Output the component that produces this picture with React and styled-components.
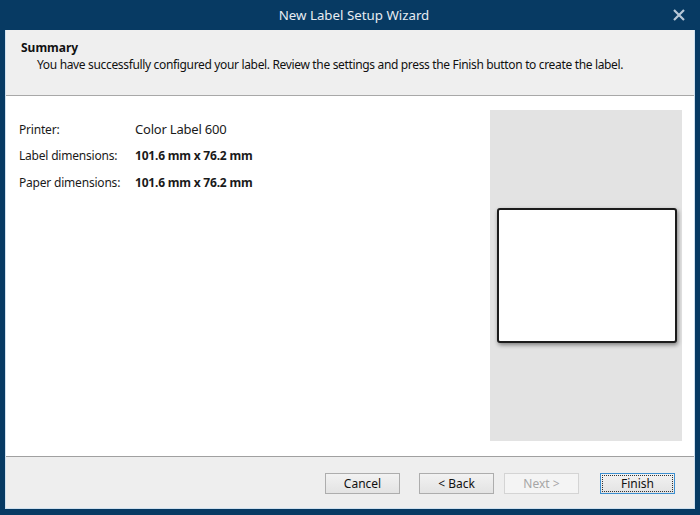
import styled, { createGlobalStyle } from "styled-components";

const Global = createGlobalStyle`
  html, body { margin: 0; padding: 0; }
  body { font-family: "Noto Sans", "Open Sans", sans-serif; }
`;

const Frame = styled.div`
  width: 700px;
  height: 515px;
  box-sizing: border-box;
  background: #073a63;
  padding: 0 5px 6px 5px;
  display: flex;
  flex-direction: column;
`;

const TitleBar = styled.div`
  height: 30px;
  flex: none;
  display: flex;
  align-items: center;
  justify-content: center;
  position: relative;
  color: #e6ecf2;
  font-size: 13.3px;
  padding-left: 8px;
`;

const Close = styled.div`
  position: absolute;
  right: 8px;
  top: 7px;
  width: 16px;
  height: 16px;
`;

const Body = styled.div`
  flex: 1;
  display: flex;
  flex-direction: column;
  background: #fff;
  border: 1px solid #cfe0ee;
  border-top: none;
`;

const Header = styled.div`
  height: 66px;
  flex: none;
  background: #efefef;
  border-bottom: 1px solid #a8a8a8;
  box-sizing: border-box;
  padding: 11px 0 0 15px;
  font-size: 12px;
  color: #111;
`;

const HeaderTitle = styled.div`
  font-weight: 700;
  line-height: 14px;
`;

const HeaderText = styled.div`
  margin-top: 2px;
  padding-left: 16px;
  line-height: 16px;
  letter-spacing: -0.34px;
`;

const Content = styled.div`
  flex: 1;
  display: flex;
  padding: 14px 12px 15px 13px;
`;

const Details = styled.div`
  flex: 1;
  padding-top: 10px;
  display: flex;
  flex-direction: column;
  gap: 11px;
`;

const Row = styled.div`
  display: flex;
  align-items: baseline;
  font-size: 12px;
  color: #1a1a1a;
  height: 16px;
`;

const Key = styled.div`
  width: 116px;
  letter-spacing: -0.2px;
`;

const Value = styled.div`
  font-size: ${(p) => (p.$bold ? "12px" : "13px")};
  font-weight: ${(p) => (p.$bold ? 700 : 400)};
  letter-spacing: -0.2px;
`;

const Preview = styled.div`
  width: 192px;
  flex: none;
  background: #e3e3e3;
  display: flex;
  align-items: center;
  justify-content: center;
`;

const LabelSheet = styled.div`
  width: 176px;
  height: 131px;
  background: #fff;
  border: 2px solid #1c1c1c;
  border-radius: 3px;
  box-shadow: 1px 2px 4px rgba(0, 0, 0, 0.45);
  margin: 0 0 0 2px;
`;

const Footer = styled.div`
  height: 52px;
  flex: none;
  background: #eeeeee;
  border-top: 1px solid #a0a0a0;
  box-sizing: border-box;
  display: flex;
  align-items: center;
  justify-content: flex-end;
  padding: 2px 19px 0 0;
`;

const Button = styled.button`
  width: 75px;
  height: 21px;
  box-sizing: border-box;
  margin-left: ${(p) => p.$gap || 0}px;
  font-family: "Noto Sans", "Open Sans", sans-serif;
  font-size: 12px;
  padding: 0;
  color: ${(p) => (p.disabled ? "#a6a6a6" : "#111")};
  background: ${(p) => (p.disabled ? "#f4f4f4" : "linear-gradient(#f2f2f2, #e3e3e3)")};
  border: 1px solid ${(p) => (p.$focus ? "#3c8fd0" : p.disabled ? "#d4d4d4" : "#adadad")};
  outline: ${(p) => (p.$focus ? "1px dotted #333" : "none")};
  outline-offset: -3px;
`;

export default function App() {
  return (
    <>
      <Global />
      <Frame>
        <TitleBar>
          New Label Setup Wizard
          <Close>
            <svg width="16" height="16" viewBox="0 0 16 16">
              <path d="M3 3 L13 13 M13 3 L3 13" stroke="#b8c8d8" strokeWidth="2.2" />
            </svg>
          </Close>
        </TitleBar>
        <Body>
          <Header>
            <HeaderTitle>Summary</HeaderTitle>
            <HeaderText>
              You have successfully configured your label. Review the settings and press the Finish button to create the label.
            </HeaderText>
          </Header>
          <Content>
            <Details>
              <Row>
                <Key>Printer:</Key>
                <Value>Color Label 600</Value>
              </Row>
              <Row>
                <Key>Label dimensions:</Key>
                <Value $bold>101.6 mm x 76.2 mm</Value>
              </Row>
              <Row>
                <Key>Paper dimensions:</Key>
                <Value $bold>101.6 mm x 76.2 mm</Value>
              </Row>
            </Details>
            <Preview>
              <LabelSheet />
            </Preview>
          </Content>
          <Footer>
            <Button>Cancel</Button>
            <Button $gap={19}>&lt; Back</Button>
            <Button $gap={10} disabled>Next &gt;</Button>
            <Button $gap={21} $focus>Finish</Button>
          </Footer>
        </Body>
      </Frame>
    </>
  );
}
